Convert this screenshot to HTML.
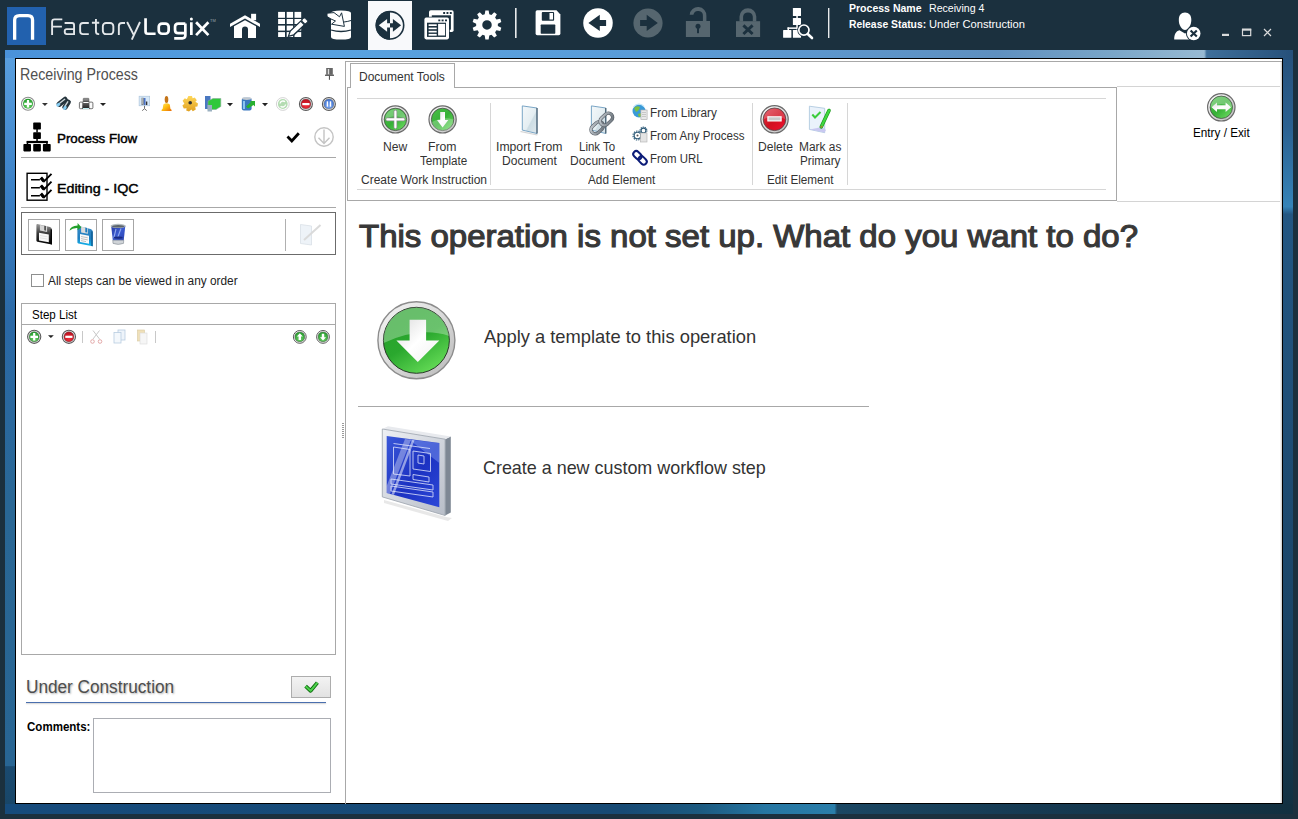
<!DOCTYPE html>
<html><head><meta charset="utf-8">
<style>
*{margin:0;padding:0;box-sizing:border-box}
html,body{width:1298px;height:819px;overflow:hidden;background:#1b303e;font-family:"Liberation Sans",sans-serif;position:relative}
.a{position:absolute}
.t{position:absolute;white-space:nowrap;line-height:1;transform-origin:0 0}
svg{position:absolute;overflow:visible}
</style></head>
<body>
<!-- window frame -->
<div class="a" style="left:5px;top:50px;width:1288px;height:764px;background:linear-gradient(180deg,#5aa0e0 0%,#3a7fc4 19.6%,#2b69a6 35%,#296795 60%,#286593 93.7%,#1a4a70 93.8%,#184566 100%)"></div>
<div class="a" style="left:1283px;top:50px;width:10px;height:764px;background:linear-gradient(180deg,#26507a 0%,#2a6090 10%,#3583b8 20.5%,#225682 21.5%,#1f4f78 45%,#1a4466 75%,#123040 100%)"></div>
<div class="a" style="left:5px;top:50px;width:1288px;height:8px;background:linear-gradient(90deg,#4a92da 0%,#58a2e0 25%,#5a9cd8 50%,#5f90c0 77%,#7aa6c8 86%,#98bad3 93.1%,#3f6f9a 93.3%,#26507a 100%)"></div>
<div class="a" style="left:5px;top:804px;width:1288px;height:10px;background:linear-gradient(90deg,#164b7c 0%,#174a74 48%,#1c5a80 54%,#2676a2 59%,#2a7eaa 64.4%,#1b4763 64.6%,#163a52 80%,#123040 100%)"></div>
<div class="a" style="left:15px;top:58px;width:1268px;height:746px;background:#fff;border:1px solid #000"></div>

<!-- title bar icons -->
<svg style="left:0;top:0" width="1298" height="50" viewBox="0 0 1298 50">
 <rect x="7" y="7" width="39" height="38" fill="#2261ae"/>
 <path d="M14.65 39.7 V20 Q14.65 15.55 19.5 15.55 H28 Q32.55 15.55 32.55 20 V39.7" fill="none" stroke="#fff" stroke-width="3.3"/>
 <g fill="none" stroke="#e3e6e9" stroke-width="1.9">
  <path d="M62.3,19.4 H54.5 Q52.1,19.4 52.1,21.8 V35.1 M52.1,26.65 H61.9"/>
  <path d="M64.6,22.95 H72 Q74.05,22.95 74.05,25 V35.1 M74.05,29.1 H66.8 Q64.75,29.1 64.75,31.1 V32.1 Q64.75,34.15 66.8,34.15 H74.05"/>
  <path d="M88.8,22.95 H83 Q80.15,22.95 80.15,25.8 V31.3 Q80.15,34.15 83,34.15 H88.8"/>
  <path d="M95.95,18.9 V31.5 Q95.95,34.15 98.5,34.15 H99.2 M91.9,22.8 H99.2"/>
  <rect x="102.85" y="22.95" width="10.5" height="11.2" rx="3.2"/>
  <path d="M118.85,35.1 V26 Q118.85,22.95 122,22.95 H125"/>
  <path d="M127.1,22 L133.6,34.6 M140,22 L131.8,39.7"/>
 </g>
 <g fill="none" stroke="#ffffff" stroke-width="2.7">
  <path d="M145.55,18.2 V31.5 Q145.55,33.75 147.8,33.75 H155.6"/>
  <rect x="158.75" y="23.55" width="9.9" height="10.2" rx="3.3"/>
  <path d="M185.35,23.55 H178.3 Q175.05,23.55 175.05,26.8 V30 Q175.05,33.2 178.3,33.2 H185.35 M185.35,23.55 V35.6 Q185.35,38.35 182.4,38.35 H174.2"/>
  <path d="M191.35,22.2 V35.1 M196.1,22.2 L208.4,35.1 M208.4,22.2 L196.1,35.1"/>
 </g>
 <circle cx="191.4" cy="18.9" r="1.5" fill="#fff"/>
 <text x="210" y="21.5" font-size="4" fill="#9aa4ad" font-family="Liberation Sans">TM</text>
 <!-- home -->
 <g fill="#fff">
  <polygon points="230,23.8 245,15.2 260,23.8 260,26.9 245,18.6 230,26.9"/>
  <rect x="251.1" y="13.8" width="5" height="6.4"/>
  <path d="M234,26.2 L245,20.2 L256,26.2 V38 H248 V29.5 A3,3 0 0 0 242,29.5 V38 H234Z"/>
 </g>
 <!-- grid + pencil -->
 <g fill="#fff">
  <rect x="278.1" y="11.9" width="6.9" height="5.9"/><rect x="286.7" y="11.9" width="6.4" height="5.9"/><rect x="294.5" y="11.9" width="6.7" height="5.9"/>
  <rect x="278.1" y="19" width="6.9" height="5"/><rect x="286.7" y="19" width="6.4" height="5"/><rect x="294.5" y="19" width="6.7" height="5"/>
  <rect x="278.1" y="25.6" width="6.9" height="5"/><rect x="286.7" y="25.6" width="6.4" height="5"/><rect x="294.5" y="25.6" width="6.7" height="5"/>
  <rect x="278.1" y="32.1" width="6.9" height="4.9"/><rect x="286.7" y="32.1" width="6.4" height="4.9"/><rect x="294.5" y="32.1" width="6.7" height="4.9"/>
 </g>
 <g transform="translate(288.4,36.4) rotate(-43.5)">
  <path d="M0,0 L5,-2.6 H19.5 V2.6 H5Z" fill="#fff" stroke="#1b303e" stroke-width="1.3"/>
  <rect x="20.6" y="-2.6" width="4" height="5.2" rx="1.2" fill="#fff" stroke="#1b303e" stroke-width="0.8"/>
 </g>
 <!-- db with arrow -->
 <g>
  <path d="M331,13 Q331,10.4 341,10.4 Q351,10.4 351,13 V37 Q351,39.6 341,39.6 Q331,39.6 331,37Z" fill="#fff"/>
  <path d="M331,30 Q341,33 351,30" fill="none" stroke="#1b303e" stroke-width="1.3"/>
  <path d="M344,22 Q348,21.5 351,20.5" fill="none" stroke="#1b303e" stroke-width="1"/>
  <path d="M327,13.2 L334,12.6 L339.5,16.8 L341.6,12.8 L344.4,26.4 L331.5,24.2 L335.5,21 L331,19 L327,16.5Z" fill="#fff" stroke="#1b303e" stroke-width="1"/>
 </g>
 <!-- selected tab -->
 <rect x="368" y="1" width="44" height="49" fill="#f8f9fb"/>
 <circle cx="390" cy="25.35" r="13.7" fill="none" stroke="#1b303e" stroke-width="1.6"/>
 <path d="M390,11 A14.35,14.35 0 0 0 390,39.7Z" fill="#1b303e"/>
 <path d="M378.8,25.3 L387.1,18.9 V23.2 H390 V27.5 H387.1 V31.8Z" fill="#f8f9fb"/>
 <path d="M401.1,25.3 L392.9,18.9 V23.2 H390 V27.5 H392.9 V31.8Z" fill="#1b303e"/>
 <!-- windows -->
 <g>
  <rect x="429" y="10.2" width="24.6" height="21.8" rx="1.8" fill="#fff"/>
  <rect x="431.8" y="15.3" width="19.1" height="14.4" fill="#1b303e"/>
  <rect x="443.2" y="12" width="1.9" height="2" fill="#1b303e"/><rect x="446.5" y="12" width="1.9" height="2" fill="#1b303e"/><rect x="449.8" y="12" width="1.9" height="2" fill="#1b303e"/>
  <rect x="423.6" y="16.8" width="26.2" height="23.4" rx="2" fill="#1b303e"/>
  <rect x="424.4" y="17.6" width="24.6" height="21.8" rx="1.8" fill="#fff"/>
  <rect x="427" y="22.7" width="19" height="14.2" fill="#1b303e"/>
  <rect x="438.3" y="19.5" width="2" height="1.8" fill="#1b303e"/><rect x="441.6" y="19.5" width="2" height="1.8" fill="#1b303e"/><rect x="445" y="19.5" width="2" height="1.8" fill="#1b303e"/>
  <rect x="428.6" y="24.3" width="8.1" height="1.7" fill="#fff"/><rect x="428.6" y="27.6" width="8.1" height="1.6" fill="#fff"/><rect x="428.6" y="30.8" width="8.1" height="1.7" fill="#fff"/><rect x="428.6" y="33.9" width="8.1" height="1.8" fill="#fff"/>
  <rect x="438.1" y="23.9" width="7" height="11.6" fill="#fff"/>
 </g>
 <!-- gear -->
 <path fill="#fff" fill-rule="evenodd" d="M484.73,14.24 L485.35,10.39 L488.65,10.39 L489.27,14.24 L491.43,14.94 L494.19,12.19 L496.86,14.14 L495.10,17.61 L496.44,19.45 L500.29,18.85 L501.31,21.99 L497.84,23.76 L497.84,26.04 L501.31,27.81 L500.29,30.95 L496.44,30.35 L495.10,32.19 L496.86,35.66 L494.19,37.61 L491.43,34.86 L489.27,35.56 L488.65,39.41 L485.35,39.41 L484.73,35.56 L482.57,34.86 L479.81,37.61 L477.14,35.66 L478.90,32.19 L477.56,30.35 L473.71,30.95 L472.69,27.81 L476.16,26.04 L476.16,23.76 L472.69,21.99 L473.71,18.85 L477.56,19.45 L478.90,17.61 L477.14,14.14 L479.81,12.19 L482.57,14.94Z M491.75,24.9 A4.75,4.75 0 1 0 482.25,24.9 A4.75,4.75 0 1 0 491.75,24.9Z"/>
 <rect x="515" y="8" width="1.6" height="30" fill="#e8eaec"/>
 <!-- save -->
 <path d="M537.2,10.3 H556.5 L560.4,14.6 V33.6 Q560.4,35.3 558.7,35.3 H537.3 Q535.6,35.3 535.6,33.6 V12 Q535.6,10.3 537.2,10.3Z" fill="#fff"/>
 <rect x="541.8" y="12.1" width="12.3" height="8.6" rx="0.8" fill="#1b303e"/>
 <rect x="549.5" y="13" width="3.5" height="6.5" fill="#fff"/>
 <rect x="540.7" y="24.6" width="14.6" height="9.1" rx="0.6" fill="#1b303e"/>
 <!-- back / forward -->
 <circle cx="598" cy="23" r="14.75" fill="#fff"/>
 <path d="M588.4,22.9 L599.8,14.8 V20 H606.1 V25.9 H599.8 V31.1Z" fill="#1b303e"/>
 <circle cx="648" cy="23" r="14.6" fill="#56666f"/>
 <path d="M657.8,22.9 L646.7,14.8 V20 H640.1 V25.9 H646.7 V31.1Z" fill="#1b303e"/>
 <!-- locks -->
 <g fill="#56666f">
  <rect x="685.9" y="21" width="24.1" height="16"/>
  <path d="M689.7,14.8 A8.3,8.3 0 0 1 706.4,16 V21.5 H702.9 V16 A4.8,4.8 0 0 0 693.4,14.8Z"/>
  <rect x="736" y="21.2" width="24.1" height="15.8"/>
  <path d="M739.5,21.5 V16.6 A8.4,8.4 0 0 1 756.3,16.6 V21.5 H752.8 V16.6 A4.9,4.9 0 0 0 743.1,16.6 V21.5Z"/>
 </g>
 <circle cx="698" cy="26.2" r="2.5" fill="#1b303e"/>
 <rect x="697" y="26" width="2" height="7.2" fill="#1b303e"/>
 <path d="M743.4,25.4 L752.6,34 M752.6,25.4 L743.4,34" stroke="#1b303e" stroke-width="2.9"/>
 <!-- hierarchy search -->
 <g fill="#fff">
  <rect x="792.9" y="8.1" width="8.1" height="7.8" rx="0.5"/>
  <rect x="796.3" y="15.5" width="1.5" height="3"/>
  <rect x="792.9" y="18.1" width="8.1" height="6.9" rx="0.5"/>
  <rect x="796.3" y="24.5" width="1.5" height="5"/>
  <rect x="787.5" y="27.4" width="10" height="1.5"/>
  <rect x="787.5" y="27.4" width="1.5" height="3"/>
  <rect x="783.1" y="30.1" width="8.3" height="7.6" rx="0.5"/>
  <rect x="792.9" y="30.1" width="8.1" height="7.6" rx="0.5"/>
 </g>
 <circle cx="803.9" cy="30.1" r="6.6" fill="#1b303e"/>
 <circle cx="803.9" cy="30.1" r="5.1" fill="none" stroke="#fff" stroke-width="1.7"/>
 <path d="M808,34.2 L812,38" stroke="#fff" stroke-width="2.6" stroke-linecap="round"/>
 <rect x="828" y="8" width="1.4" height="30" fill="#e8eaec"/>
 <!-- user -->
 <g fill="#fff">
  <path d="M1185,12.6 C1189,12.6 1191.3,15.5 1191.3,20 C1191.3,25.5 1188,30 1185,30 C1182,30 1178.8,25.5 1178.8,20 C1178.8,15.5 1181,12.6 1185,12.6Z"/>
  <path d="M1174.2,39.6 C1174.2,34 1176,31.2 1179.4,30.2 L1185,33.5 L1190.5,30.2 C1194,31.2 1195.8,34 1195.8,39.6Z"/>
 </g>
 <circle cx="1193.7" cy="33.5" r="7.8" fill="#1b303e"/>
 <circle cx="1193.7" cy="33.5" r="6.8" fill="#fff"/>
 <path d="M1190.6,30.4 L1196.8,36.6 M1196.8,30.4 L1190.6,36.6" stroke="#1b303e" stroke-width="2.1"/>
 <!-- window controls -->
 <rect x="1222" y="33.8" width="7" height="2.2" fill="#d9dadb"/>
 <rect x="1242.5" y="29.3" width="8.2" height="6.3" fill="none" stroke="#d9dadb" stroke-width="1.2"/>
 <rect x="1242" y="28.7" width="9.2" height="2" fill="#d9dadb"/>
 <path d="M1264,29 L1271,36 M1271,29 L1264,36" stroke="#d9dadb" stroke-width="1.2"/>
</svg>


<!-- ============ LEFT PANEL ============ -->
<div class="a" style="left:21px;top:157px;width:315px;height:1px;background:#a8a8a8"></div>
<div class="a" style="left:21px;top:207px;width:315px;height:1px;background:#a8a8a8"></div>
<div class="a" style="left:21px;top:212px;width:315px;height:43px;border:1.5px solid #6b6b6b"></div>
<div class="a" style="left:28px;top:219px;width:32px;height:32px;border:1px solid #a6a6a6"></div>
<div class="a" style="left:65px;top:219px;width:32px;height:32px;border:1px solid #a6a6a6"></div>
<div class="a" style="left:102px;top:219px;width:32px;height:32px;border:1px solid #a6a6a6"></div>
<div class="a" style="left:285px;top:219px;width:1px;height:32px;background:#b0b0b0"></div>
<div class="a" style="left:31px;top:274px;width:13px;height:13px;border:1px solid #8e8f8f;background:#fff"></div>
<div class="a" style="left:21px;top:303px;width:315px;height:352px;border:1px solid #a8a8a8"></div>
<div class="a" style="left:22px;top:324px;width:313px;height:1px;background:#a8a8a8"></div>
<div class="a" style="left:82px;top:331px;width:1px;height:12px;background:#c8c8c8"></div>
<div class="a" style="left:155px;top:331px;width:1px;height:12px;background:#c8c8c8"></div>
<div class="a" style="left:26px;top:701.5px;width:300px;height:1.6px;background:#4a6fae;box-shadow:0 1px 1.5px rgba(0,0,0,.22)"></div>
<div class="a" style="left:291px;top:676px;width:40px;height:22px;border:1px solid #adadad;background:linear-gradient(#f3f3f3,#e2e2e2)"></div>
<div class="a" style="left:93px;top:718px;width:238px;height:75px;border:1px solid #abadb3"></div>
<!-- splitter -->
<div class="a" style="left:345px;top:61px;width:1px;height:743px;background:#a8a8a8"></div>

<svg style="left:0;top:0" width="1298" height="819" viewBox="0 0 1298 819">
 <defs>
  <radialGradient id="gG" cx="50%" cy="70%" r="70%"><stop offset="0" stop-color="#6fd06a"/><stop offset="1" stop-color="#1f9a28"/></radialGradient>
  <radialGradient id="gR" cx="50%" cy="70%" r="70%"><stop offset="0" stop-color="#f0303a"/><stop offset="1" stop-color="#b80d1c"/></radialGradient>
  <radialGradient id="gB" cx="50%" cy="70%" r="70%"><stop offset="0" stop-color="#7aa6f0"/><stop offset="1" stop-color="#3b6fd0"/></radialGradient>
  <linearGradient id="gGold" x1="0" y1="0" x2="0" y2="1"><stop offset="0" stop-color="#ffd75a"/><stop offset="1" stop-color="#e0a020"/></linearGradient>
  <linearGradient id="gBell" x1="0" y1="0" x2="1" y2="1"><stop offset="0" stop-color="#ffe070"/><stop offset=".45" stop-color="#ffc010"/><stop offset="1" stop-color="#e86a08"/></linearGradient>
 </defs>
 <!-- pin -->
 <rect x="326.2" y="68" width="6.6" height="6.8" fill="#666"/>
 <rect x="327.8" y="69" width="1.4" height="5.6" fill="#ddd"/>
 <rect x="325" y="74.6" width="9" height="1.3" fill="#555"/>
 <rect x="328.9" y="75.5" width="1.1" height="4.3" fill="#555"/>
 <!-- toolbar -->
 <g>
  <circle cx="28" cy="103.8" r="6.5" fill="#fff" stroke="#8c8c8c" stroke-width="1.1"/>
  <circle cx="28" cy="103.8" r="5" fill="url(#gG)"/>
  <path d="M28,100 V107.6 M24.2,103.8 H31.8" stroke="#fff" stroke-width="2.2"/>
  <path d="M42,102.9 H47.8 L44.9,105.9Z" fill="#333"/>
  <!-- binoculars -->
  <g transform="translate(62.2,101.8) rotate(-38)"><rect x="-6.2" y="-2.7" width="12.4" height="5.4" rx="2.2" fill="#25343c"/><rect x="-3" y="-1.2" width="7" height="1.4" fill="#cfd8dc"/></g>
  <g transform="translate(66.6,104.6) rotate(-58)"><rect x="-5.4" y="-2.7" width="10.8" height="5.4" rx="2.2" fill="#25343c"/><rect x="-2.5" y="-1.2" width="6" height="1.4" fill="#cfd8dc"/></g>
  <ellipse cx="58.3" cy="104.7" rx="2.2" ry="1.6" fill="#86ccf2" transform="rotate(-38 58.3 104.7)"/>
  <ellipse cx="64.9" cy="107.9" rx="2.2" ry="1.6" fill="#86ccf2" transform="rotate(-58 64.9 107.9)"/>
  <!-- printer -->
  <linearGradient id="prG" x1="0" y1="0" x2="0" y2="1"><stop offset="0" stop-color="#9a9a9a"/><stop offset="1" stop-color="#5a5a5a"/></linearGradient>
  <linearGradient id="prB" x1="0" y1="0" x2="0" y2="1"><stop offset="0" stop-color="#6a6a6a"/><stop offset="1" stop-color="#1a1a1a"/></linearGradient>
  <rect x="83.2" y="98.3" width="5.7" height="4" rx=".6" fill="url(#prG)" stroke="#444" stroke-width=".5"/>
  <rect x="79.4" y="102.1" width="13.5" height="6.6" rx="1" fill="#fafafa" stroke="#3a3a3a" stroke-width=".7"/>
  <rect x="82.3" y="102.2" width="7.1" height="6.8" fill="url(#prB)"/>
  <rect x="82.8" y="108" width="6.2" height="1" fill="#bfeef2"/>
  <rect x="83.4" y="102" width="5.2" height="1" fill="#fff"/>
  <path d="M100,102.9 H106 L103,105.9Z" fill="#222"/>
  <!-- presentation -->
  <rect x="139.1" y="96.2" width="10.6" height="9.6" fill="#d6e8f8" stroke="#a8c0d8" stroke-width=".6"/>
  <rect x="141.4" y="97.8" width="2.3" height="7" fill="#6a6e72"/><rect x="141.6" y="98" width="1" height="6" fill="#d8dcdc"/>
  <rect x="143.9" y="98" width="1.6" height="7" fill="#4a72c8"/><rect x="145.9" y="101.5" width="1.4" height="3.5" fill="#333"/>
  <path d="M144.5,105.8 V108.7 M144.5,108.7 L142.2,110.7 M144.5,108.7 L146.8,110.7" stroke="#707070" stroke-width="1"/>
  <!-- bell -->
  <ellipse cx="166.5" cy="99.6" rx="1.8" ry="3.5" fill="#c47418"/>
  <path d="M163.3,104.6 Q166.5,101.8 169.8,104.6 L170.4,108.8 Q172,109.8 171.6,111 H161.6 Q161.1,109.8 162.7,108.8Z" fill="url(#gBell)"/>
  <!-- gold gear -->
  <g transform="translate(190.2,103.8)">
   <path fill="url(#gGold)" d="M-1.8,-7.8 H1.8 L2.4,-5.6 L4.6,-6.4 L6.6,-3.6 L5.2,-2 L7.8,-0.4 L7.2,2.8 L5,3 L5.6,5.6 L2.6,7.4 L1.2,5.6 L-1.2,7.8 L-4,6.6 L-3.6,4.4 L-6.4,4.6 L-7.8,1.6 L-5.8,0 L-7.6,-3 L-5.4,-5.6 L-3.4,-4.6Z"/>
   <circle cx="0" cy="-1" r="1.8" fill="#333"/>
  </g>
  <!-- green box -->
  <rect x="205" y="96" width="5.5" height="13" fill="#4a78c0"/>
  <path d="M208,101 L213,98.5 H220.8 V106.5 L216,109.5 H208Z" fill="#2fc83a" stroke="#8a9" stroke-width=".6"/>
  <rect x="207.5" y="105" width="4.5" height="6.5" fill="#9ab0c0"/>
  <path d="M227,103 H233 L230,106.2Z" fill="#222"/>
  <!-- db green arrow -->
  <rect x="241.8" y="97.8" width="9.8" height="12.6" rx="2" fill="#3a78c0"/>
  <ellipse cx="246.7" cy="98.6" rx="4.9" ry="1.4" fill="#c0c8d0"/>
  <rect x="243" y="101" width="2" height="8" fill="#8cc4f0"/>
  <path d="M246,106.5 L251,102 L249.5,101 H255 V106.5 L253.5,105 L248,108.5Z" fill="#28b030"/>
  <path d="M262,103 H268 L265,106.2Z" fill="#222"/>
  <!-- disabled refresh -->
  <circle cx="282.8" cy="104" r="6.4" fill="#fff" stroke="#d4d4d4" stroke-width="1"/>
  <circle cx="282.8" cy="104" r="4.9" fill="#b4dcb2"/>
  <path d="M280,103.5 A3,3 0 0 1 285,101.8 M285.6,104.5 A3,3 0 0 1 280.6,106.2" stroke="#fff" stroke-width="1.3" fill="none"/>
  <!-- red minus -->
  <circle cx="305.9" cy="104" r="6.5" fill="#fff" stroke="#5a5a5a" stroke-width="1.1"/>
  <circle cx="305.9" cy="104" r="5.1" fill="url(#gR)" stroke="#6a6a6a" stroke-width=".6"/>
  <rect x="302.3" y="103" width="7.2" height="2.2" fill="#fff"/>
  <!-- blue pause -->
  <circle cx="328.9" cy="104" r="6.5" fill="#fff" stroke="#5a5a5a" stroke-width="1.1"/>
  <circle cx="328.9" cy="104" r="5.1" fill="url(#gB)" stroke="#6a6a6a" stroke-width=".6"/>
  <rect x="326.7" y="101.3" width="1.4" height="5.4" fill="#fff"/><rect x="329.8" y="101.3" width="1.4" height="5.4" fill="#fff"/>
 </g>
 <!-- process flow icon -->
 <g fill="#000">
  <rect x="33.2" y="122.6" width="7.7" height="6.9" rx=".8"/>
  <rect x="36.3" y="129" width="1.5" height="3.5"/>
  <rect x="33.2" y="132.3" width="7.7" height="6.7" rx=".8"/>
  <rect x="36.3" y="138.5" width="1.5" height="3"/>
  <rect x="26.7" y="140.9" width="21" height="2.2"/>
  <rect x="26.7" y="141" width="1.5" height="3.5"/><rect x="46.2" y="141" width="1.5" height="3.5"/>
  <rect x="23.4" y="144" width="7.6" height="7.4" rx=".8"/>
  <rect x="33.2" y="144" width="7.7" height="7.4" rx=".8"/>
  <rect x="42.9" y="144" width="7.8" height="7.4" rx=".8"/>
 </g>
 <path d="M287.5,136.6 L291.8,141 L298.8,133.2" fill="none" stroke="#000" stroke-width="2.8"/>
 <circle cx="324" cy="137" r="9.2" fill="none" stroke="#c4c4c4" stroke-width="1.4"/>
 <path d="M324,129.5 V143.5 M318.5,137.8 L324,143.5 L329.5,137.8" fill="none" stroke="#c4c4c4" stroke-width="1.4"/>
 <!-- editing icon -->
 <rect x="27.1" y="173.3" width="19.9" height="26.9" fill="none" stroke="#000" stroke-width="1.4"/>
 <path d="M31,179.8 H39.9 M31,187.7 H39.9 M31,195.8 H39.9" stroke="#000" stroke-width="1.6"/>
 <path d="M41.2,177.8 L44,181.4 L51.5,173.8 M41.2,185.7 L44,189.3 L51.5,181.7 M41.2,193.8 L44,197.4 L51.5,189.8" fill="none" stroke="#000" stroke-width="1.9"/>
 <path d="M40.8,177.6 L43.9,181.2 M40.8,185.5 L43.9,189.1 M40.8,193.6 L43.9,197.2" fill="none" stroke="#000" stroke-width="3.2"/>
 <!-- box buttons -->
 <g>
  <linearGradient id="flopK" x1="0" y1="0" x2="0" y2="1"><stop offset="0" stop-color="#9a9a9a"/><stop offset=".45" stop-color="#3a3a3a"/><stop offset="1" stop-color="#000"/></linearGradient>
  <linearGradient id="flopB" x1="0" y1="0" x2="0" y2="1"><stop offset="0" stop-color="#3a8cc8"/><stop offset=".6" stop-color="#1e7ec0"/><stop offset="1" stop-color="#10b8f0"/></linearGradient>
  <path d="M37.4,224.1 L50,227 Q51.9,227.6 51.9,229.6 V244.6 L37.4,241.7 Q36.4,241.5 36.4,240.5 V225.2 Q36.4,224 37.4,224.1Z" fill="url(#flopK)"/>
  <path d="M51.9,229.6 V244.6 L50.6,244.3 V229.3Z" fill="#000"/>
  <path d="M39.9,224.9 L47.1,226.3 V231.9 L39.9,230.6Z" fill="#d4d4d4"/>
  <path d="M44.2,225.7 L46,226.1 V230.7 L44.2,230.3Z" fill="#555"/>
  <path d="M39,232.8 L48.8,234.5 V242.3 L39,240.5Z" fill="#f8f8f8"/>
  <path d="M40,235.5 L47.5,236.8 M40,237.8 L47.5,239.1" stroke="#ccc" stroke-width=".5"/>
  <path d="M78.4,226 L90.6,229 Q92.7,229.6 92.7,231.6 V246.2 L78.4,243.5 Q77.4,243.3 77.4,242.3 V227 Q77.4,225.9 78.4,226Z" fill="url(#flopB)"/>
  <path d="M92.7,231.6 V246.2 L91.3,245.9 V231.3Z" fill="#0e5a90"/>
  <path d="M81.1,226.6 L87.9,228.2 V233.8 L81.1,232.4Z" fill="#dcdcdc"/>
  <path d="M85.3,227.5 L87.2,227.9 V232.6 L85.3,232.2Z" fill="#1e7ec0"/>
  <path d="M80,234.1 L89,235.8 V243.8 L80,242.1Z" fill="#fafafa"/>
  <path d="M81,236.5 L87.8,237.8 M81,238.6 L87.8,239.9 M81,240.6 L86,241.6" stroke="#888" stroke-width=".5"/>
  <path d="M69.4,230.8 Q70.6,225.6 77.6,225.4 V223.1 L81.3,227.2 L77.6,230.2 V228.1 Q72.5,227.8 69.4,230.8Z" fill="#22a02a"/>
  <linearGradient id="trB" x1="0" y1="0" x2="1" y2="1"><stop offset="0" stop-color="#283aa0"/><stop offset=".5" stop-color="#3a5ad0"/><stop offset="1" stop-color="#2a40b0"/></linearGradient>
  <path d="M111.2,226 H125.3 L123.7,240.6 H112.8Z" fill="url(#trB)"/>
  <path d="M116,229 L113.8,238 M121,228.5 L117.5,238" stroke="#a8c0f8" stroke-width="1.1" opacity=".8"/>
  <ellipse cx="118.2" cy="237.6" rx="4.5" ry="1.2" fill="#1a2a80"/>
  <ellipse cx="118.2" cy="225.9" rx="7.7" ry="2.1" fill="#b4bcc0"/>
  <ellipse cx="118.2" cy="226.3" rx="6.4" ry="1.3" fill="#5c646c"/>
  <path d="M112.8,240.2 H123.7 L123.5,243.4 Q118.2,245.4 113,243.4Z" fill="#d0d4d8" stroke="#808890" stroke-width=".6"/>
  <!-- disabled edit -->
  <path d="M300.5,224.5 L311.5,226 V245 L300.5,243.5Z" fill="#eef3f8" stroke="#d6dde4" stroke-width=".7"/>
  <path d="M304,240 L320.5,225" stroke="#dadada" stroke-width="2"/>
 </g>
 <!-- step list toolbar -->
 <g>
  <circle cx="34.2" cy="336.8" r="6.6" fill="#fff" stroke="#5a5a5a" stroke-width="1.1"/>
  <circle cx="34.2" cy="336.8" r="5.1" fill="url(#gG)" stroke="#555" stroke-width=".5"/>
  <path d="M34.2,333 V340.6 M30.4,336.8 H38" stroke="#fff" stroke-width="2.2"/>
  <path d="M48,335.2 H53.8 L50.9,338Z" fill="#222"/>
  <circle cx="68.9" cy="336.8" r="6.6" fill="#fff" stroke="#5a5a5a" stroke-width="1.1"/>
  <circle cx="68.9" cy="336.8" r="5.1" fill="url(#gR)" stroke="#555" stroke-width=".5"/>
  <rect x="65.3" y="335.7" width="7.2" height="2.2" fill="#fff"/>
  <path d="M93,330.5 L99.5,339 M99.5,330.5 L93,339" stroke="#c8c8c8" stroke-width="1"/>
  <circle cx="92.5" cy="341.5" r="1.8" fill="none" stroke="#e0a0a0" stroke-width=".9"/>
  <circle cx="100" cy="341.5" r="1.8" fill="none" stroke="#e0a0a0" stroke-width=".9"/>
  <rect x="118" y="330" width="7" height="10" fill="#eef4fa" stroke="#b8cce0" stroke-width=".8"/>
  <rect x="114" y="332.5" width="7" height="10.5" fill="#f4f8fc" stroke="#b8cce0" stroke-width=".8"/>
  <rect x="137.5" y="330" width="7" height="11" fill="#f0e0b8" stroke="#d8c8a0" stroke-width=".6"/>
  <rect x="140" y="333" width="7" height="11" fill="#f6f6f6" stroke="#dadada" stroke-width=".6"/>
  <circle cx="299.8" cy="336.9" r="6.4" fill="#fff" stroke="#5a5a5a" stroke-width="1"/>
  <circle cx="299.8" cy="336.9" r="5" fill="url(#gG)" stroke="#555" stroke-width=".5"/>
  <path d="M299.8,333.3 L296.8,336.6 H298.6 V340 H301 V336.6 H302.8Z" fill="#fff"/>
  <circle cx="323" cy="336.9" r="6.4" fill="#fff" stroke="#5a5a5a" stroke-width="1"/>
  <circle cx="323" cy="336.9" r="5" fill="url(#gG)" stroke="#555" stroke-width=".5"/>
  <path d="M323,340.5 L320,337.2 H321.8 V333.8 H324.2 V337.2 H326Z" fill="#fff"/>
 </g>
 <!-- check button -->
 <path d="M305.6,686.2 L310.6,690.8 L317.4,682.6" fill="none" stroke="#0c6a0c" stroke-width="3.8" stroke-linejoin="round"/>
 <path d="M305.6,686.2 L310.6,690.8 L317.4,682.6" fill="none" stroke="#4cd04c" stroke-width="2" stroke-linejoin="round"/>
 <!-- splitter dots -->
 <g fill="#9a9a9a">
  <rect x="342" y="423" width="2" height="1"/><rect x="342" y="425" width="2" height="1"/><rect x="342" y="427" width="2" height="1"/><rect x="342" y="429" width="2" height="1"/>
  <rect x="342" y="431" width="2" height="1"/><rect x="342" y="433" width="2" height="1"/><rect x="342" y="435" width="2" height="1"/><rect x="342" y="437" width="2" height="1"/>
 </g>
</svg>


<!-- ============ RIBBON ============ -->
<div class="a" style="left:345px;top:61px;width:937px;height:1px;background:#a8a8a8"></div>
<div class="a" style="left:347px;top:87px;width:770px;height:114px;border:1px solid #a8a8a8"></div>
<div class="a" style="left:350px;top:63px;width:105px;height:25px;border:1px solid #a8a8a8;border-bottom:none;background:#fff"></div>
<div class="a" style="left:357px;top:98px;width:749px;height:1px;background:#d6d6d6"></div>
<div class="a" style="left:357px;top:189px;width:749px;height:1px;background:#d6d6d6"></div>
<div class="a" style="left:490px;top:103px;width:1px;height:82px;background:#d6d6d6"></div>
<div class="a" style="left:752px;top:103px;width:1px;height:82px;background:#d6d6d6"></div>
<div class="a" style="left:847px;top:103px;width:1px;height:82px;background:#d6d6d6"></div>
<div class="a" style="left:1117px;top:86px;width:164px;height:1px;background:#d4d4d4"></div>
<div class="a" style="left:1117px;top:201px;width:164px;height:1px;background:#d4d4d4"></div>
<div class="a" style="left:1280px;top:62px;width:2px;height:741px;background:linear-gradient(90deg,#fff,#c8c8c8)"></div>
<div class="a" style="left:358px;top:406px;width:511px;height:1px;background:#a8a8a8"></div>

<svg style="left:0;top:0" width="1298" height="819" viewBox="0 0 1298 819">
 <defs>
  <linearGradient id="ringG" x1="0" y1="0" x2="1" y2="1"><stop offset="0" stop-color="#fdfdfd"/><stop offset="1" stop-color="#bdbdbd"/></linearGradient>
  <linearGradient id="grn" x1="0" y1="0" x2="1" y2="1"><stop offset="0" stop-color="#4cc04a"/><stop offset=".5" stop-color="#36b036"/><stop offset="1" stop-color="#74e268"/></linearGradient>
  <linearGradient id="red" x1="0" y1="0" x2="1" y2="1"><stop offset="0" stop-color="#e04050"/><stop offset=".5" stop-color="#d0101f"/><stop offset="1" stop-color="#f01030"/></linearGradient>
  <linearGradient id="arrW" x1="0" y1="0" x2="1" y2="1"><stop offset="0" stop-color="#dcdcdc"/><stop offset=".5" stop-color="#ffffff"/><stop offset="1" stop-color="#f0f0f0"/></linearGradient>
  <linearGradient id="docG" x1="0" y1="0" x2="1" y2="1"><stop offset="0" stop-color="#f4f8fa"/><stop offset=".55" stop-color="#e4eef2"/><stop offset=".6" stop-color="#cddde4"/><stop offset="1" stop-color="#dfe9ee"/></linearGradient>
  <linearGradient id="chainG" x1="0" y1="0" x2="1" y2="1"><stop offset="0" stop-color="#c4cad0"/><stop offset="1" stop-color="#6c747c"/></linearGradient>
  <linearGradient id="scrB" x1="0" y1="0" x2="1" y2="1"><stop offset="0" stop-color="#3a58d8"/><stop offset=".55" stop-color="#1c32c2"/><stop offset="1" stop-color="#2c48d8"/></linearGradient>
  <linearGradient id="frmS" x1="0" y1="0" x2="1" y2="1"><stop offset="0" stop-color="#eef0f4"/><stop offset="1" stop-color="#b8bec8"/></linearGradient>
 </defs>
 <!-- New -->
 <circle cx="395.4" cy="119.4" r="13.6" fill="url(#ringG)" stroke="#6a6a6a" stroke-width="1.2"/>
 <circle cx="395.4" cy="119.4" r="11.2" fill="url(#grn)" stroke="#4a4a4a" stroke-width="0.8"/>
 <path d="M384.9,119.4 A10.5,10.5 0 0 1 405.9,119.4 Q395.4,113 384.9,119.4Z" fill="#fff" opacity=".28"/>
 <path d="M395.4,111.5 V127.3 M387.3,119.4 H403.5" stroke="#8a8a8a" stroke-width="3.6" stroke-linecap="round"/>
 <path d="M395.4,111.5 V127.3 M387.3,119.4 H403.5" stroke="#fff" stroke-width="2.2" stroke-linecap="round"/>
 <!-- From Template -->
 <circle cx="442.6" cy="119.4" r="13.6" fill="url(#ringG)" stroke="#6a6a6a" stroke-width="1.2"/>
 <circle cx="442.6" cy="119.4" r="11.2" fill="url(#grn)" stroke="#4a4a4a" stroke-width="0.8"/>
 <path d="M432,122 Q442.6,116 453.2,119.4 A10.6,10.6 0 0 1 432,122Z" fill="#fff" opacity=".25"/>
 <path d="M440.2,112.1 H445 V120.1 H448.3 L442.6,127.4 L437,120.1 H440.2Z" fill="url(#arrW)"/>
 <!-- Import doc -->
 <path d="M521,131 L538,134.5 L537,135.5 L520,132Z" fill="#bbb" opacity=".6"/>
 <path d="M522.3,105.9 L537,108 V133.5 L522.3,130.1Z" fill="url(#docG)" stroke="#6c9cc0" stroke-width="0.9"/>
 <path d="M537,108 V133.5" stroke="#3a4a58" stroke-width="1"/>
 <!-- Link doc -->
 <path d="M591.4,105.9 L605.8,108 V133.5 L591.4,130.1Z" fill="url(#docG)" stroke="#6c9cc0" stroke-width="0.9"/>
 <path d="M605.8,108 V133.5" stroke="#3a4a58" stroke-width="1"/>
 <g transform="translate(602,123.3) rotate(-43)">
  <rect x="-13.5" y="-4.2" width="14" height="8.4" rx="4.2" fill="none" stroke="#5a626a" stroke-width="3.4"/>
  <rect x="-13.5" y="-4.2" width="14" height="8.4" rx="4.2" fill="none" stroke="url(#chainG)" stroke-width="2.2"/>
  <rect x="-1" y="-4.2" width="14" height="8.4" rx="4.2" fill="none" stroke="#5a626a" stroke-width="3.4"/>
  <rect x="-1" y="-4.2" width="14" height="8.4" rx="4.2" fill="none" stroke="url(#chainG)" stroke-width="2.2"/>
 </g>
 <!-- From Library -->
 <circle cx="639" cy="111" r="6.5" fill="#3a9ad8"/>
 <path d="M634,108 Q637,105 640,107 Q639,111 636,112Z M638,114 Q641,112 644,115 Q641,117.5 638.5,116.5Z" fill="#7cc040"/>
 <path d="M633.5,107 A6.5,6.5 0 0 1 644,106.5" stroke="#bfe4f8" stroke-width="1.2" fill="none"/>
 <rect x="640.9" y="110" width="6.2" height="9.5" fill="#e8e8e8" stroke="#a8a8a8" stroke-width=".6"/>
 <path d="M642,112.5 H646 M642,114.5 H646 M642,116.5 H646" stroke="#b0b0b0" stroke-width=".6"/>
 <!-- From Any Process gears -->
 <g fill="none" stroke="#2d5a78" stroke-width="1.1">
  <circle cx="637.5" cy="135.5" r="4.5" stroke-dasharray="1.4 1"/>
  <circle cx="637.5" cy="135.5" r="3.3"/>
  <circle cx="643.5" cy="130.5" r="3.4" stroke-dasharray="1.2 .9"/>
  <circle cx="643.5" cy="130.5" r="2.4"/>
 </g>
 <circle cx="637.5" cy="135.5" r="1" fill="#555"/>
 <rect x="640.5" y="133" width="6.5" height="9" fill="#e4e4e4" stroke="#b0b0b0" stroke-width=".6"/>
 <!-- From URL chain -->
 <g transform="translate(640,157.8) rotate(45)">
  <rect x="-8.3" y="-3" width="9.3" height="6" rx="3" fill="none" stroke="#0c1c78" stroke-width="2"/>
  <rect x="-1" y="-3" width="9.3" height="6" rx="3" fill="none" stroke="#0c1c78" stroke-width="2"/>
 </g>
 <!-- Delete -->
 <circle cx="774.5" cy="119.3" r="13.7" fill="url(#ringG)" stroke="#6a6a6a" stroke-width="1.2"/>
 <circle cx="774.5" cy="119.3" r="11.3" fill="url(#red)" stroke="#4a4a4a" stroke-width="0.8"/>
 <path d="M763.8,119.3 A10.7,10.7 0 0 1 785.2,119.3 Q774.5,112.5 763.8,119.3Z" fill="#fff" opacity=".2"/>
 <rect x="767.3" y="116.2" width="14.4" height="5.3" fill="#fff"/>
 <rect x="768.5" y="117.3" width="12" height="3.1" fill="#c8c8c8"/>
 <!-- Mark as Primary -->
 <path d="M809.4,106.2 L824.7,108.3 V132.7 L809.4,129.4Z" fill="#eaf2fb" stroke="#a8c4dc" stroke-width=".8"/>
 <path d="M809.8,129.6 L824.5,132.5 L826,130 L822,127Z" fill="#c8c8f0"/>
 <path d="M812.3,114.5 L815,117.5 L820.5,112" fill="none" stroke="#3ccc3c" stroke-width="2"/>
 <path d="M821.3,126.8 L829,110.5" stroke="#1a9a1a" stroke-width="3.6" stroke-linecap="round"/>
 <path d="M821.3,126.8 L829,110.5" stroke="#40d840" stroke-width="2.2" stroke-linecap="round"/>
 <path d="M820.6,128 L821,125.5 L823,126.5Z" fill="#b07a30"/>
 <!-- Entry/Exit -->
 <circle cx="1221.3" cy="107.3" r="13.7" fill="url(#ringG)" stroke="#6a6a6a" stroke-width="1.2"/>
 <circle cx="1221.3" cy="107.3" r="11.2" fill="url(#grn)" stroke="#4a4a4a" stroke-width="0.8"/>
 <path d="M1210.6,107.3 A10.7,10.7 0 0 1 1232,107.3 Q1221.3,101 1210.6,107.3Z" fill="#fff" opacity=".3"/>
 <path d="M1211.5,107.3 L1217,102.5 V105.3 H1225.6 V102.5 L1231.1,107.3 L1225.6,112 V109.3 H1217 V112Z" fill="url(#arrW)"/>
 <!-- Big green arrow -->
 <defs>
  <linearGradient id="bigRing" x1="0" y1="0" x2="1" y2="1"><stop offset="0" stop-color="#f6f6f6"/><stop offset=".5" stop-color="#dadada"/><stop offset="1" stop-color="#b8b8b8"/></linearGradient>
  <linearGradient id="bigG" x1="0.2" y1="0" x2="0.8" y2="1"><stop offset="0" stop-color="#26a02a"/><stop offset=".5" stop-color="#2aa82e"/><stop offset="1" stop-color="#6ae05a"/></linearGradient>
 </defs>
 <circle cx="416.4" cy="340.3" r="38.5" fill="url(#bigRing)" stroke="#8c8c8c" stroke-width="1.4"/>
 <circle cx="416.4" cy="340.3" r="33" fill="url(#bigG)" stroke="#2a3a2a" stroke-width="1"/>
 <path d="M383.6,343 A33,33 0 0 1 449.2,336 Q420,326 383.6,343Z" fill="#fff" opacity=".3"/>
 <path d="M409.6,319.7 H426.1 V340.6 H439.3 L417.8,362.1 L396.4,340.6 H409.6Z" fill="url(#arrW)"/>
 <!-- Monitor -->
 <path d="M384,500 L446,517 L452,518 L448,521 L384,503Z" fill="#ccc" opacity=".45"/>
 <path d="M445.1,439.2 L450.8,436.5 V512.5 L445.1,515.5Z" fill="#7e8894"/>
 <path d="M382.3,429 L388,426.3 L450.8,436.5 L445.1,439.2Z" fill="#e8eaee"/>
 <path d="M382.3,429 L445.1,439.2 V515.5 L382.3,496.9Z" fill="url(#frmS)" stroke="#9aa2ac" stroke-width=".8"/>
 <path d="M386.7,436 L439.3,443 V507.2 L386.7,493.1Z" fill="url(#scrB)"/>
 <path d="M409,439.6 L439.3,443 V463 Q425,452 409,439.6Z" fill="#8aa4f4" opacity=".45"/>
 <path d="M405,439 L411,439.8 L390,493.8 L386.7,493.1 V486Z" fill="#fff" opacity=".35"/>
 <path d="M412,440 L414.5,440.3 L394,494.8 L391.5,494.2Z" fill="#fff" opacity=".5"/>
 <g fill="none" stroke="#e8ecff" stroke-width=".9" opacity=".85">
  <path d="M393.5,443.5 L430,448.5"/>
  <path d="M393.5,447 L410,449.5 V476 L393.5,474Z"/>
  <path d="M413,451 L430.5,453.5 V471.5 L413,469Z"/>
  <path d="M418,455 L424,456 V464 L418,463Z"/>
  <path d="M413,474.5 L429,477 V482 L413,479.5Z"/>
  <path d="M391,479 L433,485 V490 L391,484Z"/>
  <path d="M391,486 L433,492 V497 L391,491Z"/>
 </g>
</svg>

<div class="t" style="left:849.34px;top:3px;font-size:11px;font-weight:bold;color:#ffffff;transform:scaleX(0.9573);">Process Name</div>
<div class="t" style="left:929.24px;top:3px;font-size:11px;font-weight:normal;color:#ffffff;transform:scaleX(0.9643);">Receiving 4</div>
<div class="t" style="left:849.36px;top:19px;font-size:11px;font-weight:bold;color:#ffffff;transform:scaleX(0.9413);">Release Status:</div>
<div class="t" style="left:929.19px;top:19px;font-size:11px;font-weight:normal;color:#ffffff;transform:scaleX(1.0129);">Under Construction</div>
<div class="t" style="left:19.89px;top:67px;font-size:15.6px;font-weight:normal;color:#505050;transform:scaleX(0.9133);">Receiving Process</div>
<div class="t" style="left:56.87px;top:132px;font-size:13px;font-weight:normal;color:#000000;transform:scaleX(1.0282);-webkit-text-stroke:0.45px #000;">Process Flow</div>
<div class="t" style="left:56.80px;top:182px;font-size:13px;font-weight:normal;color:#000000;transform:scaleX(1.0973);-webkit-text-stroke:0.45px #000;">Editing - IQC</div>
<div class="t" style="left:48.20px;top:275px;font-size:12.5px;font-weight:normal;color:#222222;transform:scaleX(0.9475);">All steps can be viewed in any order</div>
<div class="t" style="left:32.08px;top:309px;font-size:12.5px;font-weight:normal;color:#000000;transform:scaleX(0.9250);">Step List</div>
<div class="t" style="left:25.85px;top:678px;font-size:18px;font-weight:normal;color:#4e4e4e;transform:scaleX(0.9549);text-shadow:1px 1px 2px rgba(0,0,0,.3);">Under Construction</div>
<div class="t" style="left:26.80px;top:721px;font-size:12px;font-weight:bold;color:#000000;transform:scaleX(0.9615);">Comments:</div>
<div class="t" style="left:358.94px;top:71px;font-size:12.5px;font-weight:normal;color:#333333;transform:scaleX(0.9602);">Document Tools</div>
<div class="t" style="left:383.09px;top:141px;font-size:12px;font-weight:normal;color:#333333;transform:scaleX(1.0087);">New</div>
<div class="t" style="left:428.38px;top:141px;font-size:12px;font-weight:normal;color:#333333;transform:scaleX(1.0192);">From</div>
<div class="t" style="left:419.50px;top:155px;font-size:12px;font-weight:normal;color:#333333;transform:scaleX(0.9708);">Template</div>
<div class="t" style="left:360.50px;top:174px;font-size:12px;font-weight:normal;color:#333333;transform:scaleX(1.0016);">Create Work Instruction</div>
<div class="t" style="left:495.98px;top:141px;font-size:12px;font-weight:normal;color:#333333;transform:scaleX(1.0172);">Import From</div>
<div class="t" style="left:501.70px;top:155px;font-size:12px;font-weight:normal;color:#333333;transform:scaleX(1.0037);">Document</div>
<div class="t" style="left:578.94px;top:141px;font-size:12px;font-weight:normal;color:#333333;transform:scaleX(0.9568);">Link To</div>
<div class="t" style="left:569.70px;top:155px;font-size:12px;font-weight:normal;color:#333333;transform:scaleX(1.0019);">Document</div>
<div class="t" style="left:650.42px;top:107px;font-size:12px;font-weight:normal;color:#333333;transform:scaleX(0.9836);">From Library</div>
<div class="t" style="left:650.44px;top:130px;font-size:12px;font-weight:normal;color:#333333;transform:scaleX(0.9649);">From Any Process</div>
<div class="t" style="left:650.45px;top:153px;font-size:12px;font-weight:normal;color:#333333;transform:scaleX(0.9500);">From URL</div>
<div class="t" style="left:588.00px;top:174px;font-size:12px;font-weight:normal;color:#333333;transform:scaleX(0.9797);">Add Element</div>
<div class="t" style="left:757.79px;top:141px;font-size:12px;font-weight:normal;color:#333333;transform:scaleX(1.0061);">Delete</div>
<div class="t" style="left:799.01px;top:141px;font-size:12px;font-weight:normal;color:#333333;transform:scaleX(0.9927);">Mark as</div>
<div class="t" style="left:799.52px;top:155px;font-size:12px;font-weight:normal;color:#333333;transform:scaleX(0.9775);">Primary</div>
<div class="t" style="left:766.62px;top:174px;font-size:12px;font-weight:normal;color:#333333;transform:scaleX(0.9761);">Edit Element</div>
<div class="t" style="left:1192.86px;top:127px;font-size:12.5px;font-weight:normal;color:#000000;transform:scaleX(0.9383);">Entry / Exit</div>
<div class="t" style="left:358.80px;top:221px;font-size:31.6px;font-weight:normal;color:#383838;transform:scaleX(1.0437);-webkit-text-stroke:1.15px #383838;">This operation is not set up. What do you want to do?</div>
<div class="t" style="left:484.20px;top:328px;font-size:18.5px;font-weight:normal;color:#333333;transform:scaleX(0.9912);">Apply a template to this operation</div>
<div class="t" style="left:483.23px;top:459px;font-size:18.5px;font-weight:normal;color:#333333;transform:scaleX(0.9683);">Create a new custom workflow step</div>

</body></html>
